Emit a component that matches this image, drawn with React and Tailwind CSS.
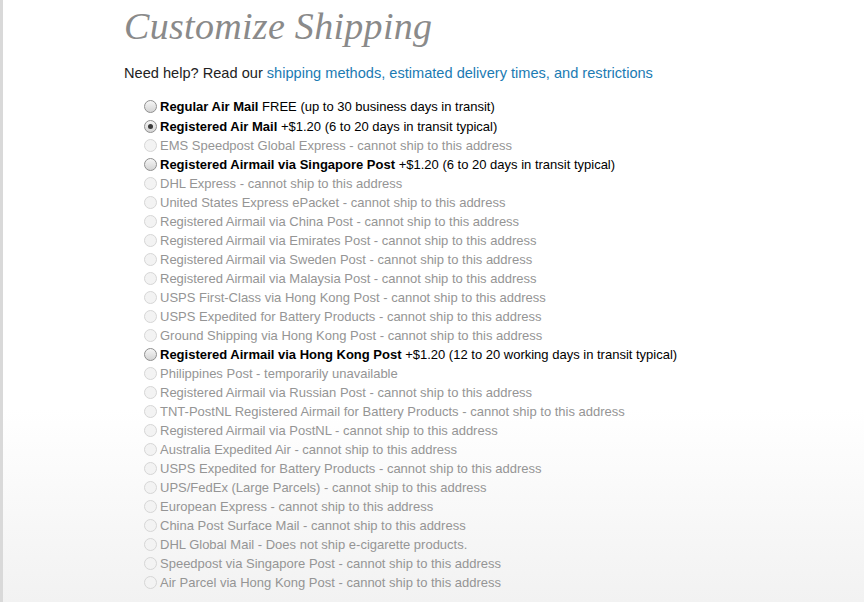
import React from 'react'

const options = [
  { name: 'Regular Air Mail', rest: ' FREE (up to 30 business days in transit)' },
  { name: 'Registered Air Mail', rest: ' +$1.20 (6 to 20 days in transit typical)', checked: true },
  { text: 'EMS Speedpost Global Express - cannot ship to this address' },
  { name: 'Registered Airmail via Singapore Post', rest: ' +$1.20 (6 to 20 days in transit typical)' },
  { text: 'DHL Express - cannot ship to this address' },
  { text: 'United States Express ePacket - cannot ship to this address' },
  { text: 'Registered Airmail via China Post - cannot ship to this address' },
  { text: 'Registered Airmail via Emirates Post - cannot ship to this address' },
  { text: 'Registered Airmail via Sweden Post - cannot ship to this address' },
  { text: 'Registered Airmail via Malaysia Post - cannot ship to this address' },
  { text: 'USPS First-Class via Hong Kong Post - cannot ship to this address' },
  { text: 'USPS Expedited for Battery Products - cannot ship to this address' },
  { text: 'Ground Shipping via Hong Kong Post - cannot ship to this address' },
  { name: 'Registered Airmail via Hong Kong Post', rest: ' +$1.20 (12 to 20 working days in transit typical)' },
  { text: 'Philippines Post - temporarily unavailable' },
  { text: 'Registered Airmail via Russian Post - cannot ship to this address' },
  { text: 'TNT-PostNL Registered Airmail for Battery Products - cannot ship to this address' },
  { text: 'Registered Airmail via PostNL - cannot ship to this address' },
  { text: 'Australia Expedited Air - cannot ship to this address' },
  { text: 'USPS Expedited for Battery Products - cannot ship to this address' },
  { text: 'UPS/FedEx (Large Parcels) - cannot ship to this address' },
  { text: 'European Express - cannot ship to this address' },
  { text: 'China Post Surface Mail - cannot ship to this address' },
  { text: 'DHL Global Mail - Does not ship e-cigarette products.' },
  { text: 'Speedpost via Singapore Post - cannot ship to this address' },
  { text: 'Air Parcel via Hong Kong Post - cannot ship to this address' },
]

// old-style gray radio, drawn with spans so it looks the same everywhere
const Radio = ({ checked, disabled }) => (
  <span
    className={
      disabled
        ? 'w-[13px] h-[13px] rounded-full border border-[#d6d6d6] bg-[#f3f3f3] shrink-0'
        : 'w-[13px] h-[13px] rounded-full border border-[#8f8f8f] bg-linear-to-b from-[#f6f6f6] to-[#d4d4d4] shrink-0 flex items-center justify-center'
    }
  >
    {checked && <span className="w-[5px] h-[5px] rounded-full bg-[#3a3a3a]" />}
  </span>
)

const App = () => {
  return (
    <div className="min-h-[602px] bg-linear-to-b from-white from-[68%] to-[#f2f2f2] border-l-[3px] border-[#d9d9d9] font-['Liberation_Sans',Arial,sans-serif]">
      <div className="pl-[121px] pt-[3px]">
        <h1 className="font-['Liberation_Serif',Georgia,serif] italic text-[38px] leading-[46px] text-[#8a8a8a] tracking-[0.3px]">
          Customize Shipping
        </h1>

        <p className="mt-[15px] text-[14.6px] leading-[18px] text-[#222]">
          Need help? Read our{' '}
          <a href="#" className="text-[#1b7bb3]">
            shipping methods, estimated delivery times, and restrictions
          </a>
        </p>

        <ul className="mt-[14px] pl-[20px] text-[13px] leading-[19px]">
          {options.map((opt, i) => (
            <li key={i} className={i === 0 ? 'flex items-center gap-[3px] h-[21px]' : 'flex items-center gap-[3px] h-[19px]'}>
              <Radio checked={opt.checked} disabled={!!opt.text} />
              {opt.text ? (
                <span className="text-[#959595]">{opt.text}</span>
              ) : (
                <span className="text-black">
                  <b>{opt.name}</b>
                  {opt.rest}
                </span>
              )}
            </li>
          ))}
        </ul>
      </div>
    </div>
  )
}

export default App
